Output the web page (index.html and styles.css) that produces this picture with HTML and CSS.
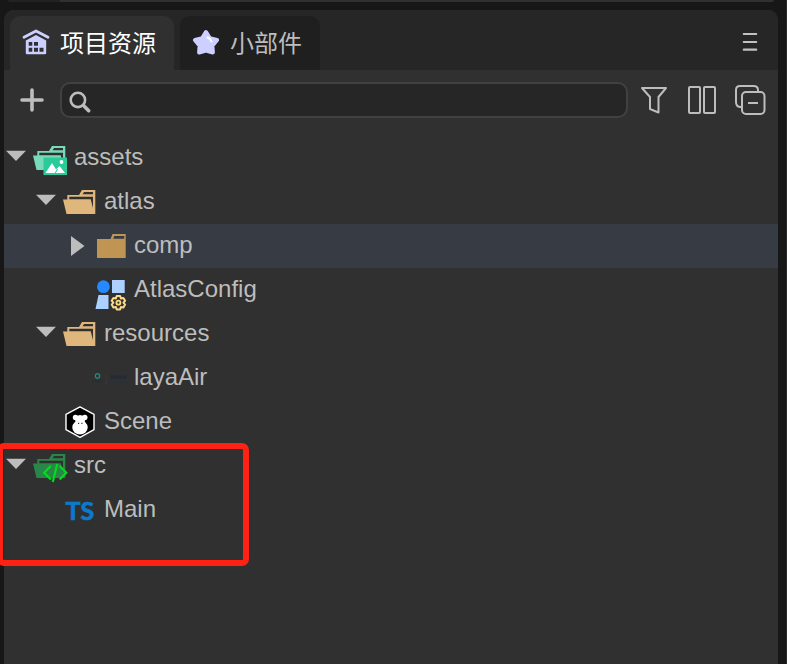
FILE: index.html
```html
<!DOCTYPE html>
<html lang="zh-CN">
<head>
<meta charset="utf-8">
<title>项目资源</title>
<link rel="stylesheet" href="styles.css">
</head>
<body>
<svg class="defs" width="0" height="0">
  <defs>
    <path id="down" d="M2 14.800H22L12 25Z"/>
    <path id="right" d="M7 12V32L20.500 22Z"/>
    <path id="open" fill-rule="evenodd" d="M5.300 15H17L20 10H33.300V34H4.500L1 19.500H5.300ZM7.300 16.800H31V28L28.700 19.300H7.300ZM22 12H31V14.200H20.600Z"/>
  </defs>
</svg>
<div class="above"></div>
<main class="panel">
  <header class="tabs">
    <div class="tab active">
      <svg width="28" height="28" viewBox="0 0 28 28"><path fill="#cdd0ff" fill-rule="evenodd" d="M3.800 11.500L14 6L24.200 11.500V24Q24.200 25.300 23 25.300H5Q3.800 25.300 3.800 24ZM6.700 13V16.700H10.300V13ZM12 13V16.700H16V13ZM6.700 18.700V22.700H10.300V18.700ZM12 18.700V22.700H16V18.700ZM17.500 18.700V22.700H21.500V18.700Z"/><path d="M2 8.300L14 2L26 8.300" fill="none" stroke="#cdd0ff" stroke-width="2.800" stroke-linecap="round" stroke-linejoin="round"/></svg>
      <span>项目资源</span>
    </div>
    <div class="tab">
      <svg width="28" height="28" viewBox="0 0 28 28"><path d="M14 3.200L17.800 9.300L25 11L20.300 16.700L20.800 23.400L14 21.500L7.200 23.400L7.700 16.700L3 11L10.200 9.300Z" fill="#cdd0ff" stroke="#cdd0ff" stroke-width="4.200" stroke-linejoin="round"/><path d="M15.500 8.500Q18.500 9.500 19.500 12.500" fill="none" stroke="#fff" stroke-width="1.900" stroke-linecap="round"/></svg>
      <span>小部件</span>
    </div>
    <svg class="menu" width="16" height="20" viewBox="0 0 16 20"><path d="M1.800 2H14.200M1.800 10H14.200M1.800 17.700H14.200" stroke="#c1c1c1" stroke-width="2.200" stroke-linecap="round"/></svg>
  </header>
  <div class="toolbar">
    <svg class="plus" width="24" height="24" viewBox="0 0 24 24"><path d="M12 2V22M2 12H22" stroke="#bdbdbd" stroke-width="3.600" stroke-linecap="round"/></svg>
    <div class="search"><svg width="24" height="24" viewBox="0 0 24 24"><g fill="none" stroke="#bdbdbd"><circle cx="9.900" cy="9.900" r="7.200" stroke-width="2.600"/><path d="M15.500 15.500L20.700 20.700" stroke-width="3.600" stroke-linecap="round"/></g></svg></div>
    <svg class="tools" width="128" height="36" viewBox="0 0 128 36"><g fill="none" stroke="#bdbdbd" stroke-width="2" stroke-linejoin="round"><path d="M4 6H28L20.500 15V30.500L12 27V15Z"/><rect x="51" y="5" width="11" height="26" rx="1"/><rect x="66" y="5" width="11" height="26" rx="1"/><path d="M103.500 25H102Q98 24.500 98 20V8Q98 4 102 4H115.500Q120 4 120 8V9"/><rect x="104" y="10" width="22.500" height="22" rx="4"/><path d="M110 21H120"/></g></svg>
  </div>
  <div class="tree">
    <div class="row">
      <svg class="arrow"><use href="#down"/></svg>
      <svg class="icon"><use href="#open" fill="#77dbb9"/><path d="M11.500 21.500H35V39H11.500Z" fill="#2acb99"/><path d="M13.500 37L20 27L24 33.500L27.500 30L33 37Z" fill="#fff"/><path d="M23.300 37L25.500 33" stroke="#2acb99" stroke-width="1"/><circle cx="29.500" cy="26" r="1.900" fill="#fff"/></svg>
      <span>assets</span>
    </div>
    <div class="row d1">
      <svg class="arrow"><use href="#down"/></svg>
      <svg class="icon"><use href="#open" fill="#dfb77d"/></svg>
      <span>atlas</span>
    </div>
    <div class="row d2 selected">
      <svg class="arrow"><use href="#right"/></svg>
      <svg class="icon"><path fill="#c09553" fill-rule="evenodd" d="M5 15H18.500L20.500 10H33.700V34H5ZM22.300 12L21.200 14.800H32.200V12Z"/></svg>
      <span>comp</span>
    </div>
    <div class="row d2">
      <svg class="arrow"></svg>
      <svg class="icon"><circle cx="11.400" cy="18.700" r="6.400" fill="#2589ff"/><path d="M20 12H32.700V25H20ZM6.500 27H16.500V41H3.500Z" fill="#acd0ff"/><path d="M24.700 28H28.100L28.900 30.400L31.400 29.900L33.100 32.800L31.400 34.700L33.100 36.600L31.400 39.500L28.900 39L28.100 41.400H24.700L23.900 39L21.400 39.500L19.700 36.600L21.400 34.700L19.700 32.800L21.400 29.900L23.900 30.400Z" fill="#303030" stroke="#fbd98a" stroke-width="2" stroke-linejoin="round"/><circle cx="26.400" cy="34.700" r="2" fill="none" stroke="#fbd98a" stroke-width="1.800"/></svg>
      <span>AtlasConfig</span>
    </div>
    <div class="row d1">
      <svg class="arrow"><use href="#down"/></svg>
      <svg class="icon"><use href="#open" fill="#dfb77d"/></svg>
      <span>resources</span>
    </div>
    <div class="row d2">
      <svg class="arrow"></svg>
      <svg class="icon"><path d="M5.500 17.500L7.500 18.700V21.300L5.500 22.500L3.500 21.300V18.700Z" fill="none" stroke="#26887b" stroke-width="1.400"/><path d="M0 25.500H11" stroke="#222a3a" stroke-width="1.600" stroke-dasharray="2 .5"/><path d="M14.300 18V28" stroke="#3a3a3a"/><path d="M19 21H35" stroke="#212a3b" stroke-width="3" stroke-dasharray="2 .6"/><path d="M18 26.500H36" stroke="#293036" stroke-width="1.200" stroke-dasharray="1.500 .5"/></svg>
      <span>layaAir</span>
    </div>
    <div class="row d1">
      <svg class="arrow"></svg>
      <svg class="icon"><path d="M18 6.800L32 14.300V29.700L18 37.300L4 29.700V14.300Z" fill="#000" stroke="#fff" stroke-width="1.400" stroke-linejoin="round"/><g fill="#fff"><circle cx="13.500" cy="17.500" r="2.700"/><circle cx="22.800" cy="17.500" r="2.700"/><path d="M13 16.500L18 15L23.500 16.500L22.500 24H13.500Z"/><ellipse cx="18" cy="27.500" rx="7.700" ry="6.900"/></g><path d="M16 23.300H17.200M19.300 23.300H20.500" stroke="#000" stroke-width="1"/></svg>
      <span>Scene</span>
    </div>
    <div class="row">
      <svg class="arrow"><use href="#down"/></svg>
      <svg class="icon"><use href="#open" fill="#288748"/><path d="M18.800 22L12.200 28.800L18.800 35.500M27.700 22L34.300 28.800L27.700 35.500M25.200 20L20.800 38" fill="none" stroke="#00dd18" stroke-width="2.200"/></svg>
      <span>src</span>
    </div>
    <div class="row d1">
      <svg class="arrow"></svg>
      <svg class="icon ts"><text x="3.500" y="32">TS</text></svg>
      <span>Main</span>
    </div>
  </div>
</main>
<div class="highlight"></div>
</body>
</html>
```
FILE: styles.css
```css
* { box-sizing: border-box; }
body {
  margin: 0;
  height: 664px;
  overflow: hidden;
  position: relative;
  background: #171717;
  border-right: 1px solid #2a2a2a;
  font-family: "Liberation Sans", "Noto Sans CJK SC", sans-serif;
  font-size: 24px;
  color: #bdbdbd;
}
svg { display: block; flex: none; }
.defs { position: absolute; }
.above {
  height: 2px;
  margin: 0 12px 8px 8px;
  background: linear-gradient(90deg, #222 52px, #303030 52px);
  border-radius: 0 0 3px 3px;
}
.panel {
  width: 774px;
  height: 654px;
  margin-left: 4px;
  background: #303030;
  border-radius: 10px 10px 0 0;
  overflow: hidden;
}
.tabs {
  display: flex;
  gap: 6px;
  height: 60px;
  padding: 6px 20px 0 6px;
  background: #262626;
}
.tab {
  display: flex;
  align-items: center;
  gap: 10px;
  width: 140px;
  padding: 0 0 0 12px;
  background: #1f1f1f;
  border-radius: 10px 10px 0 0;
  white-space: nowrap;
}
.tab.active { width: 164px; background: #303030; color: #fff; }
.tab span { line-height: 36px; margin-top: 1px; }
.menu { margin: 16px 0 0 auto; }
.toolbar {
  display: flex;
  align-items: center;
  height: 60px;
  padding: 0 10px 0 16px;
}
.search {
  display: flex;
  align-items: center;
  width: 568px;
  height: 36px;
  margin-left: 16px;
  padding: 3px 0 0 6px;
  border: 2px solid #414141;
  border-radius: 10px;
  background: #262626;
}
.tools { margin-left: 10px; }
.tree { padding-top: 6px; }
.row {
  display: flex;
  height: 44px;
  line-height: 42px;
}
.d1 { padding-left: 30px; }
.d2 { padding-left: 60px; }
.selected { background: #373b44; }
.arrow { width: 28px; height: 44px; fill: #bdbdbd; }
.icon { width: 36px; height: 44px; margin-right: 6px; }
.ts text {
  font: 700 25px Lato, sans-serif;
  fill: #0b7acb;
  stroke: #0b7acb;
  stroke-width: 0.7px;
}
.highlight {
  position: absolute;
  left: -3px;
  top: 443px;
  width: 252px;
  height: 123px;
  border: 6px solid #ff2113;
  border-radius: 7px;
}
```
